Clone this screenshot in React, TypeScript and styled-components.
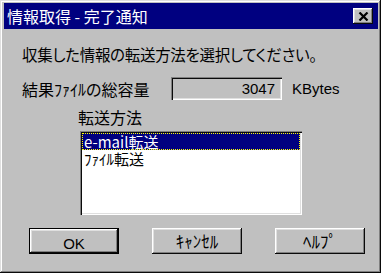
import React, { useState } from 'react';
import styled, { createGlobalStyle } from 'styled-components';

const GlobalStyle = createGlobalStyle`
  html, body {
    margin: 0;
    padding: 0;
    background: #ffffff;
  }
  body {
    font-family: "Liberation Sans", "Noto Sans CJK JP", sans-serif;
    font-feature-settings: "palt";
  }
`;

const raised = `
  box-shadow:
    inset -1px -1px #0a0a0a,
    inset 1px 1px #ffffff,
    inset -2px -2px #808080,
    inset 2px 2px #dfdfdf;
`;

const sunken = `
  box-shadow:
    inset 1px 1px #808080,
    inset 2px 2px #0a0a0a,
    inset -1px -1px #ffffff,
    inset -2px -2px #dfdfdf;
`;

const methods = ['e-mail転送', 'ﾌｧｲﾙ転送'];

const App: React.FC = () => {
  const [selected, setSelected] = useState(0);

  return (
    <>
      <GlobalStyle />
      <Window>
        <TitleBar>
          <Title>情報取得 - 完了通知</Title>
          <CloseButton aria-label="close">
            <svg width="11" height="9" viewBox="0 0 11 9">
              <path d="M1.5 0.5 L9.5 8.5 M9.5 0.5 L1.5 8.5" stroke="#000" strokeWidth="2.2" />
            </svg>
          </CloseButton>
        </TitleBar>

        <Body>
          <Message>収集した情報の転送方法を選択してください。</Message>

          <SizeRow>
            <SizeLabel>結果ﾌｧｲﾙの総容量</SizeLabel>
            <ReadOnlyBox>3047</ReadOnlyBox>
            <Unit>KBytes</Unit>
          </SizeRow>

          <GroupLabel>転送方法</GroupLabel>
          <ListBox>
            {methods.map((m, i) => (
              <ListItem key={m} $active={i === selected} onClick={() => setSelected(i)}>
                {m}
              </ListItem>
            ))}
          </ListBox>

          <ButtonRow>
            <Button $default>
              <Latin>OK</Latin>
            </Button>
            <Button>ｷｬﾝｾﾙ</Button>
            <Button>ﾍﾙﾌﾟ</Button>
          </ButtonRow>
        </Body>
      </Window>
    </>
  );
};

const Window = styled.div`
  width: 381px;
  height: 273px;
  box-sizing: border-box;
  padding: 3px 3px 3px 4px;
  background: #c0c0c0;
  display: flex;
  flex-direction: column;
  box-shadow:
    inset -1px -1px #0a0a0a,
    inset 1px 1px #dfdfdf,
    inset -2px -2px #808080,
    inset 2px 2px #ffffff;
`;

const TitleBar = styled.div`
  height: 26px;
  background: #000080;
  display: flex;
  align-items: center;
  justify-content: space-between;
  padding: 0 5px 0 3px;
  color: #ffffff;
`;

const Title = styled.span`
  font-size: 16px;
  line-height: 18px;
  font-family: "Noto Sans CJK JP", sans-serif;
  font-feature-settings: "palt";
`;

const CloseButton = styled.button`
  width: 20px;
  height: 16px;
  padding: 0;
  border: none;
  background: #c0c0c0;
  display: flex;
  align-items: center;
  justify-content: center;
  ${raised}
`;

const Body = styled.div`
  flex: 1;
  display: flex;
  flex-direction: column;
  padding: 16px 0 0 18px;
  color: #000000;
  font-size: 16px;
`;

const Message = styled.div`
  font-size: 15.5px;
  letter-spacing: -0.3px;
  line-height: 18px;
  font-family: "Noto Sans CJK JP", sans-serif;
`;

const SizeRow = styled.div`
  display: flex;
  align-items: center;
  margin-top: 14px;
  height: 23px;
`;

const SizeLabel = styled.span`
  width: 149px;
  line-height: 18px;
  font-family: "Noto Sans CJK JP", sans-serif;
`;

const ReadOnlyBox = styled.div`
  width: 111px;
  height: 23px;
  box-sizing: border-box;
  padding: 0 7px;
  display: flex;
  align-items: center;
  justify-content: flex-end;
  font-size: 15px;
  background: #c0c0c0;
  ${sunken}
`;

const Unit = styled.span`
  margin-left: 10px;
  font-size: 15px;
`;

const GroupLabel = styled.div`
  margin: 8px 0 0 56px;
  line-height: 18px;
  font-family: "Noto Sans CJK JP", sans-serif;
`;

const ListBox = styled.div`
  margin: 5px 0 0 58px;
  width: 222px;
  height: 84px;
  box-sizing: border-box;
  padding: 2px;
  background: #ffffff;
  display: flex;
  flex-direction: column;
  ${sunken}
`;

const ListItem = styled.div<{ $active?: boolean }>`
  height: 17px;
  line-height: 17px;
  padding: 0 2px;
  font-size: 15px;
  font-family: "Noto Sans CJK JP", sans-serif;
  font-feature-settings: normal;
  background: ${(p) => (p.$active ? '#000080' : 'transparent')};
  color: ${(p) => (p.$active ? '#ffffff' : '#000000')};
  outline: ${(p) => (p.$active ? '1px dotted #ffff00' : 'none')};
  outline-offset: -1px;
  cursor: default;
`;

const ButtonRow = styled.div`
  display: flex;
  gap: 33px;
  margin: 13px 0 0 7px;
`;

const Button = styled.button<{ $default?: boolean }>`
  width: 90px;
  height: 26px;
  padding: 0 0 2px;
  border: ${(p) => (p.$default ? '1px solid #000000' : 'none')};
  box-sizing: border-box;
  background: #c0c0c0;
  color: #000000;
  font-size: 17px;
  font-family: "Noto Sans CJK JP", sans-serif;
  font-feature-settings: normal;
  ${raised}
`;

const Latin = styled.span`
  font-family: "Liberation Sans", sans-serif;
  font-size: 15px;
`;

export default App;
